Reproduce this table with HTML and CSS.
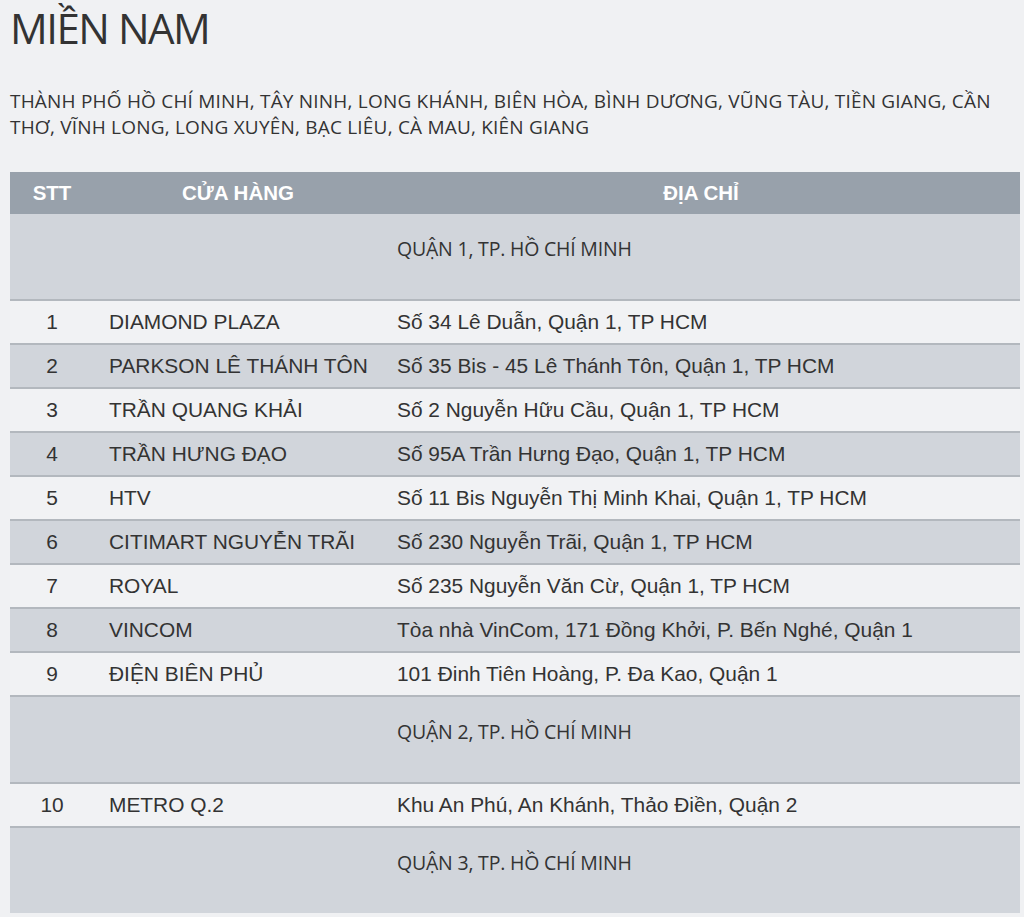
FILE: index.html
```html
<!DOCTYPE html>
<html lang="vi">
<head>
<meta charset="utf-8">
<title>Miền Nam</title>
<link rel="stylesheet" href="styles.css">
</head>
<body>
<div class="page">
  <h1 class="title">MIỀN NAM</h1>
  <p class="cities">THÀNH PHỐ HỒ CHÍ MINH, TÂY NINH, LONG KHÁNH, BIÊN HÒA, BÌNH DƯƠNG, VŨNG TÀU, TIỀN GIANG, CẦN THƠ, VĨNH LONG, LONG XUYÊN, BẠC LIÊU, CÀ MAU, KIÊN GIANG</p>
  <table class="stores">
    <colgroup>
      <col class="c-stt">
      <col class="c-name">
      <col class="c-addr">
    </colgroup>
    <thead>
      <tr>
        <th>STT</th>
        <th>CỬA HÀNG</th>
        <th>ĐỊA CHỈ</th>
      </tr>
    </thead>
    <tbody>
      <tr class="group"><td></td><td></td><td>QUẬN 1, TP. HỒ CHÍ MINH</td></tr>
      <tr class="odd"><td class="num">1</td><td>DIAMOND PLAZA</td><td>Số 34 Lê Duẫn, Quận 1, TP HCM</td></tr>
      <tr class="even"><td class="num">2</td><td>PARKSON LÊ THÁNH TÔN</td><td>Số 35 Bis - 45 Lê Thánh Tôn, Quận 1, TP HCM</td></tr>
      <tr class="odd"><td class="num">3</td><td>TRẦN QUANG KHẢI</td><td>Số 2 Nguyễn Hữu Cầu, Quận 1, TP HCM</td></tr>
      <tr class="even"><td class="num">4</td><td>TRẦN HƯNG ĐẠO</td><td>Số 95A Trần Hưng Đạo, Quận 1, TP HCM</td></tr>
      <tr class="odd"><td class="num">5</td><td>HTV</td><td>Số 11 Bis Nguyễn Thị Minh Khai, Quận 1, TP HCM</td></tr>
      <tr class="even"><td class="num">6</td><td>CITIMART NGUYỄN TRÃI</td><td>Số 230 Nguyễn Trãi, Quận 1, TP HCM</td></tr>
      <tr class="odd"><td class="num">7</td><td>ROYAL</td><td>Số 235 Nguyễn Văn Cừ, Quận 1, TP HCM</td></tr>
      <tr class="even"><td class="num">8</td><td>VINCOM</td><td>Tòa nhà VinCom, 171 Đồng Khởi, P. Bến Nghé, Quận 1</td></tr>
      <tr class="odd"><td class="num">9</td><td>ĐIỆN BIÊN PHỦ</td><td>101 Đinh Tiên Hoàng, P. Đa Kao, Quận 1</td></tr>
      <tr class="group"><td></td><td></td><td>QUẬN 2, TP. HỒ CHÍ MINH</td></tr>
      <tr class="odd"><td class="num">10</td><td>METRO Q.2</td><td>Khu An Phú, An Khánh, Thảo Điền, Quận 2</td></tr>
      <tr class="group"><td></td><td></td><td>QUẬN 3, TP. HỒ CHÍ MINH</td></tr>
    </tbody>
  </table>
</div>
</body>
</html>
```
FILE: styles.css
```css
html, body {
  margin: 0;
  padding: 0;
  background: #f0f1f3;
}
.page {
  padding: 0 4px 0 10px;
  color: #333;
}
.title {
  margin: 0;
  padding-top: 2px;
  font-family: "Open Sans", sans-serif;
  font-weight: 400;
  font-size: 42px;
  line-height: 52px;
  letter-spacing: -1.5px;
  color: #333;
}
.cities {
  margin: 34px 0 0;
  font-family: "Open Sans", sans-serif;
  font-size: 19px;
  line-height: 26px;
  letter-spacing: 0.2px;
  color: #333;
}
.stores {
  margin-top: 32px;
  width: 1010px;
  border-collapse: collapse;
  font-family: "Liberation Sans", Arial, sans-serif;
  font-size: 20.9px;
  color: #333;
}
.c-stt { width: 84px; }
.c-name { width: 288px; }
.stores th {
  background: #98a1ab;
  color: #fff;
  font-weight: 700;
  font-size: 20.5px;
  height: 42px;
  padding: 0;
  text-align: center;
}
.stores td {
  padding: 0 0 0 15px;
  height: 42px;
  border-top: 2px solid #b3b8be;
  text-align: left;
  white-space: nowrap;
}
.stores td.num {
  text-align: center;
  padding-left: 0;
}
.odd td { background: #f1f2f4; }
.even td { background: #d1d5db; }
.group td {
  background: #d1d5db;
  height: 64px;
  vertical-align: top;
  padding-top: 21px;
  font-family: "Open Sans", sans-serif;
  font-size: 19.5px;
  letter-spacing: -0.2px;
}
thead + tbody .group:first-child td { border-top: 0; }
```
